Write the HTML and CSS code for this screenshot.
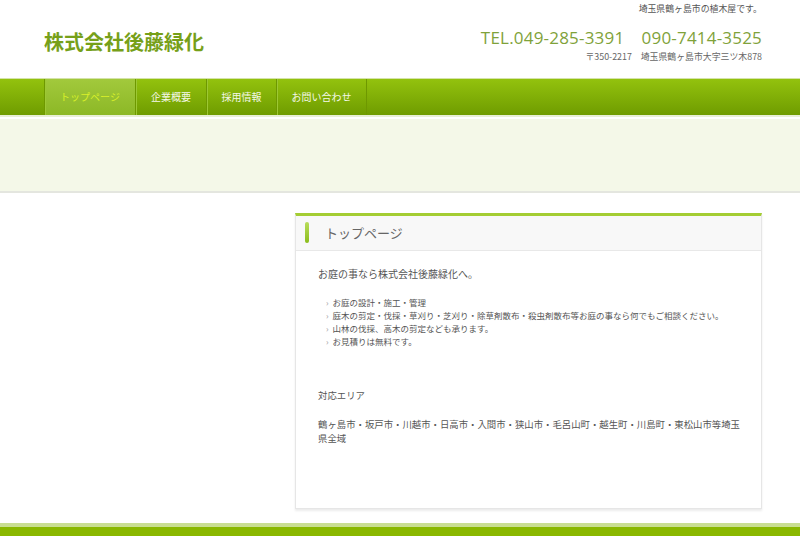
FILE: index.html
```html
<!DOCTYPE html>
<html lang="ja">
<head>
    <meta charset="UTF-8">
    <title>株式会社後藤緑化</title>
    <link rel="stylesheet" href="styles.css">
</head>
<body>

    <header class="site-header">
        <div class="inner">
            <h1 class="logo">株式会社後藤緑化</h1>
            <div class="contact">
                <p class="tagline">埼玉県鶴ヶ島市の植木屋です。</p>
                <p class="tel">TEL.049-285-3391　090-7414-3525</p>
                <p class="address">〒350-2217　埼玉県鶴ヶ島市大字三ツ木878</p>
            </div>
        </div>
    </header>

    <nav class="global-nav">
        <ul class="inner">
            <li class="current"><a href="#">トップページ</a></li>
            <li><a href="#">企業概要</a></li>
            <li><a href="#">採用情報</a></li>
            <li><a href="#">お問い合わせ</a></li>
        </ul>
    </nav>

    <div class="band"></div>

    <main class="inner content">
        <aside class="sidebar"></aside>
        <section class="post">
            <h2 class="post-title">トップページ</h2>
            <div class="post-body">
                <p class="lead">お庭の事なら株式会社後藤緑化へ。</p>
                <ul class="services">
                    <li>お庭の設計・施工・管理</li>
                    <li>庭木の剪定・伐採・草刈り・芝刈り・除草剤散布・殺虫剤散布等お庭の事なら何でもご相談ください。</li>
                    <li>山林の伐採、高木の剪定なども承ります。</li>
                    <li>お見積りは無料です。</li>
                </ul>
                <p class="area-title">対応エリア</p>
                <p class="area">鶴ヶ島市・坂戸市・川越市・日高市・入間市・狭山市・毛呂山町・越生町・川島町・東松山市等埼玉県全域</p>
            </div>
        </section>
    </main>

    <footer class="site-footer"></footer>

</body>
</html>
```

FILE: styles.css
```css
body {
    margin: 0;
    font-family: "Noto Sans CJK JP", "Noto Sans", sans-serif;
    color: #555;
    background: #fff;
}
p, ul, h1, h2 {
    margin: 0;
    padding: 0;
}
.inner {
    width: 718px;
    margin-left: 44px;
}
.site-header {
    height: 78px;
}
.site-header .inner {
    display: flex;
    justify-content: space-between;
}
.logo {
    margin-top: 29px;
    font-size: 20px;
    line-height: 26px;
    font-weight: bold;
    color: #76a019;
}
.contact {
    text-align: right;
}
.tagline {
    margin-top: 3px;
    font-size: 8.9px;
    line-height: 12px;
    color: #555;
}
.tel {
    margin-top: 12px;
    font-family: "Open Sans", "Noto Sans", sans-serif;
    font-size: 17px;
    line-height: 22px;
    color: #7fa23a;
    letter-spacing: 0.2px;
}
.address {
    margin-top: 2px;
    font-size: 8.9px;
    line-height: 12px;
    color: #666;
}
.global-nav {
    height: 36px;
    border-top: 1px solid #d4e3a8;
    border-bottom: 2px solid #e8efd6;
    background: linear-gradient(#93c20e, #6f9c00);
}
.global-nav ul {
    list-style: none;
    display: flex;
    height: 36px;
    border-left: 1px solid #6e9800;
}
.global-nav li {
    border-right: 1px solid #6e9800;
    box-shadow: inset 1px 0 0 #9dc834;
}
.global-nav li:nth-child(1) { width: 90px; }
.global-nav li:nth-child(2) { width: 70px; }
.global-nav li:nth-child(3) { width: 69px; }
.global-nav li:nth-child(4) { width: 89px; }
.global-nav a {
    display: block;
    line-height: 36px;
    text-align: center;
    font-size: 10px;
    color: #f4f8e8;
    text-decoration: none;
}
.global-nav li.current {
    background: linear-gradient(#a2c93c, #8cb826);
}
.global-nav li.current a {
    color: #d9f02a;
}
.band {
    height: 72px;
    margin-top: 2px;
    background: #f4f8e8;
    border-bottom: 2px solid #e4e6df;
}
.content {
    display: flex;
    margin-top: 20px;
}
.sidebar {
    width: 251px;
}
.post {
    width: 465px;
    height: 292px;
    border: 1px solid #e6e6e6;
    border-top: 3px solid #a4cd33;
    box-shadow: 0 2px 2px #ececec;
}
.post-title {
    position: relative;
    height: 34px;
    padding-left: 29px;
    font-size: 13px;
    line-height: 34px;
    font-weight: normal;
    color: #666;
    background: #f8f8f8;
    border-bottom: 1px solid #e8e8e8;
}
.post-title::before {
    content: "";
    position: absolute;
    left: 9px;
    top: 6px;
    width: 4px;
    height: 21px;
    border-radius: 2px;
    background: linear-gradient(#b9dc5a, #8bbd1c);
}
.post-body {
    padding: 15px 16px 0 22px;
}
.lead {
    font-size: 10px;
    line-height: 16px;
}
.services {
    list-style: none;
    margin-top: 14px;
    margin-left: 8px;
}
.services li {
    font-size: 8.5px;
    line-height: 13px;
}
.services li::before {
    content: "›";
    margin-right: 4px;
    color: #999;
}
.area-title {
    margin-top: 40px;
    font-size: 9.4px;
    line-height: 14px;
}
.area {
    margin-top: 15px;
    font-size: 9.4px;
    line-height: 14px;
}
.site-footer {
    margin-top: 14px;
    height: 10px;
    border-top: 4px solid #c9de92;
    background: #8ab800;
}
```
